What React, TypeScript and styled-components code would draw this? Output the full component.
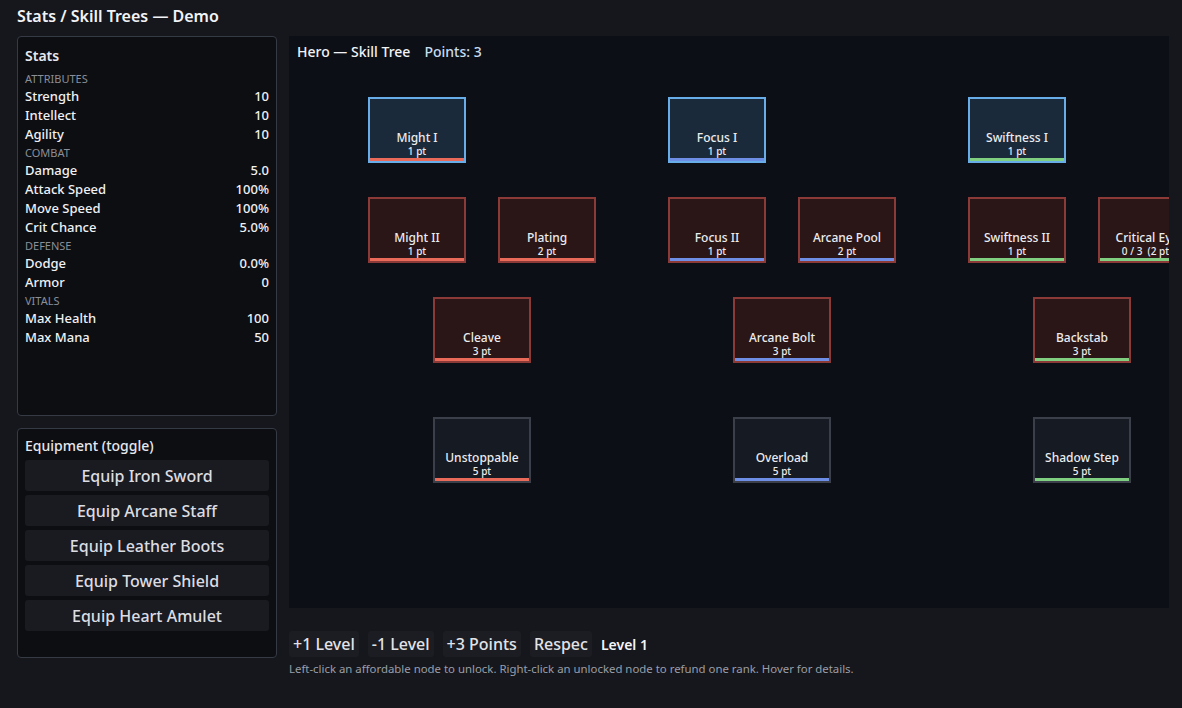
import React from 'react'
import styled, { createGlobalStyle } from 'styled-components'

const GlobalStyle = createGlobalStyle`
  html, body {
    margin: 0;
    padding: 0;
    background: #16171c;
    color: #e6e8ee;
    font-family: "Noto Sans", "Open Sans", sans-serif;
  }
`

const Page = styled.div`
  width: 1182px;
  height: 708px;
  box-sizing: border-box;
  padding: 5px 14px 0 17px;
  overflow: hidden;
`

const Title = styled.h1`
  margin: 0;
  font-size: 16px;
  font-weight: 600;
  line-height: 22px;
  color: #f2f3f6;
`

const Body = styled.div`
  display: grid;
  grid-template-columns: 260px 880px;
  column-gap: 12px;
  margin-top: 9px;
`

const Side = styled.div`
  display: flex;
  flex-direction: column;
  gap: 12px;
`

const Panel = styled.section<{ $height: number }>`
  height: ${(p) => p.$height}px;
  box-sizing: border-box;
  border: 1px solid #363a45;
  border-radius: 4px;
  background: #0d0e12;
  padding: 9px 7px 8px 7px;
`

const PanelTitle = styled.div`
  font-size: 14px;
  font-weight: 600;
  line-height: 20px;
  margin-bottom: 4px;
`

const Group = styled.div`
  font-size: 11px;
  line-height: 17px;
  color: #8a8e98;
  text-transform: uppercase;
`

const StatRow = styled.div`
  display: flex;
  justify-content: space-between;
  font-size: 13px;
  font-weight: 500;
  line-height: 19px;
  color: #f0f1f4;
`

const EquipTitle = styled.div`
  font-size: 14px;
  font-weight: 500;
  line-height: 20px;
  margin-top: -2px;
  margin-bottom: 4px;
`

const EquipList = styled.div`
  display: flex;
  flex-direction: column;
  gap: 4px;
`

const EquipButton = styled.button`
  height: 31px;
  border: none;
  border-radius: 3px;
  background: #1a1b21;
  color: #dcdde2;
  font-family: inherit;
  font-size: 16px;
  font-weight: 500;
  padding: 0;
`

const Main = styled.div`
  display: flex;
  flex-direction: column;
`

const Canvas = styled.div`
  position: relative;
  height: 572px;
  background: #0c0f16;
  overflow: hidden;
`

const TreeHeader = styled.div`
  display: flex;
  gap: 14px;
  padding: 7px 8px 5px;
  font-size: 14px;
  font-weight: 500;
  line-height: 18px;
  color: #f2f3f6;
`

const Points = styled.span`
  color: #c8dcf0;
`

type Tone = 'open' | 'locked' | 'far'
type Branch = 'might' | 'focus' | 'swift'

const toneBorder: Record<Tone, string> = {
  open: '#68ace8',
  locked: '#8b3a38',
  far: '#3b3f4a',
}
const toneFill: Record<Tone, string> = {
  open: '#1b2a3a',
  locked: '#2a1616',
  far: '#161a22',
}
const branchColor: Record<Branch, string> = {
  might: '#e96a58',
  focus: '#6e8ee6',
  swift: '#80ce80',
}

const Node = styled.div<{ $tone: Tone; $branch: Branch }>`
  position: absolute;
  width: 98px;
  height: 66px;
  box-sizing: border-box;
  border: 2px solid ${(p) => toneBorder[p.$tone]};
  background: ${(p) => toneFill[p.$tone]};
  display: flex;
  flex-direction: column;
  justify-content: flex-end;
  align-items: center;
  padding-bottom: 4px;
  color: #ebecef;
  white-space: pre;
  &::after {
    content: '';
    position: absolute;
    left: 0;
    right: 0;
    bottom: 0;
    height: 3px;
    background: ${(p) => branchColor[p.$branch]};
  }
`

const NodeName = styled.div`
  font-size: 12px;
  font-weight: 500;
  line-height: 14px;
`

const NodeCost = styled.div`
  font-size: 10px;
  font-weight: 500;
  line-height: 12px;
`

const Controls = styled.div`
  display: flex;
  align-items: center;
  gap: 9px;
  margin-top: 23px;
`

const CtrlButton = styled.button`
  height: 26px;
  border: none;
  border-radius: 3px;
  background: #1c1d22;
  color: #e2e3e8;
  font-family: inherit;
  font-size: 16px;
  font-weight: 500;
  padding: 0 4px;
  line-height: 26px;
`

const LevelLabel = styled.span`
  font-size: 14px;
  font-weight: 600;
  color: #f4f5f7;
`

const Hint = styled.div`
  font-size: 11.4px;
  line-height: 15px;
  color: #9a9ea8;
  margin-top: 4px;
`

const stats: { group: string; rows: [string, string][] }[] = [
  { group: 'Attributes', rows: [['Strength', '10'], ['Intellect', '10'], ['Agility', '10']] },
  {
    group: 'Combat',
    rows: [['Damage', '5.0'], ['Attack Speed', '100%'], ['Move Speed', '100%'], ['Crit Chance', '5.0%']],
  },
  { group: 'Defense', rows: [['Dodge', '0.0%'], ['Armor', '0']] },
  { group: 'Vitals', rows: [['Max Health', '100'], ['Max Mana', '50']] },
]

const equipment = ['Iron Sword', 'Arcane Staff', 'Leather Boots', 'Tower Shield', 'Heart Amulet']

const nodes: { name: string; cost: string; x: number; y: number; tone: Tone; branch: Branch }[] = [
  { name: 'Might I', cost: '1 pt', x: 79, y: 61, tone: 'open', branch: 'might' },
  { name: 'Focus I', cost: '1 pt', x: 379, y: 61, tone: 'open', branch: 'focus' },
  { name: 'Swiftness I', cost: '1 pt', x: 679, y: 61, tone: 'open', branch: 'swift' },
  { name: 'Might II', cost: '1 pt', x: 79, y: 161, tone: 'locked', branch: 'might' },
  { name: 'Plating', cost: '2 pt', x: 209, y: 161, tone: 'locked', branch: 'might' },
  { name: 'Focus II', cost: '1 pt', x: 379, y: 161, tone: 'locked', branch: 'focus' },
  { name: 'Arcane Pool', cost: '2 pt', x: 509, y: 161, tone: 'locked', branch: 'focus' },
  { name: 'Swiftness II', cost: '1 pt', x: 679, y: 161, tone: 'locked', branch: 'swift' },
  { name: 'Critical Eye', cost: '0 / 3  (2 pt)', x: 809, y: 161, tone: 'locked', branch: 'swift' },
  { name: 'Cleave', cost: '3 pt', x: 144, y: 261, tone: 'locked', branch: 'might' },
  { name: 'Arcane Bolt', cost: '3 pt', x: 444, y: 261, tone: 'locked', branch: 'focus' },
  { name: 'Backstab', cost: '3 pt', x: 744, y: 261, tone: 'locked', branch: 'swift' },
  { name: 'Unstoppable', cost: '5 pt', x: 144, y: 381, tone: 'far', branch: 'might' },
  { name: 'Overload', cost: '5 pt', x: 444, y: 381, tone: 'far', branch: 'focus' },
  { name: 'Shadow Step', cost: '5 pt', x: 744, y: 381, tone: 'far', branch: 'swift' },
]

export default function App() {
  return (
    <Page>
      <GlobalStyle />
      <Title>Stats / Skill Trees — Demo</Title>
      <Body>
        <Side>
          <Panel $height={380}>
            <PanelTitle>Stats</PanelTitle>
            {stats.map((g) => (
              <div key={g.group}>
                <Group>{g.group}</Group>
                {g.rows.map(([label, value]) => (
                  <StatRow key={label}>
                    <span>{label}</span>
                    <span>{value}</span>
                  </StatRow>
                ))}
              </div>
            ))}
          </Panel>
          <Panel $height={230}>
            <EquipTitle>Equipment (toggle)</EquipTitle>
            <EquipList>
              {equipment.map((item) => (
                <EquipButton key={item}>Equip {item}</EquipButton>
              ))}
            </EquipList>
          </Panel>
        </Side>
        <Main>
          <Canvas>
            <TreeHeader>
              <span>Hero — Skill Tree</span>
              <Points>Points: 3</Points>
            </TreeHeader>
            {nodes.map((n) => (
              <Node key={n.name} $tone={n.tone} $branch={n.branch} style={{ left: n.x, top: n.y }}>
                <NodeName>{n.name}</NodeName>
                <NodeCost>{n.cost}</NodeCost>
              </Node>
            ))}
          </Canvas>
          <Controls>
            <CtrlButton>+1 Level</CtrlButton>
            <CtrlButton>-1 Level</CtrlButton>
            <CtrlButton>+3 Points</CtrlButton>
            <CtrlButton>Respec</CtrlButton>
            <LevelLabel>Level 1</LevelLabel>
          </Controls>
          <Hint>Left-click an affordable node to unlock. Right-click an unlocked node to refund one rank. Hover for details.</Hint>
        </Main>
      </Body>
    </Page>
  )
}
